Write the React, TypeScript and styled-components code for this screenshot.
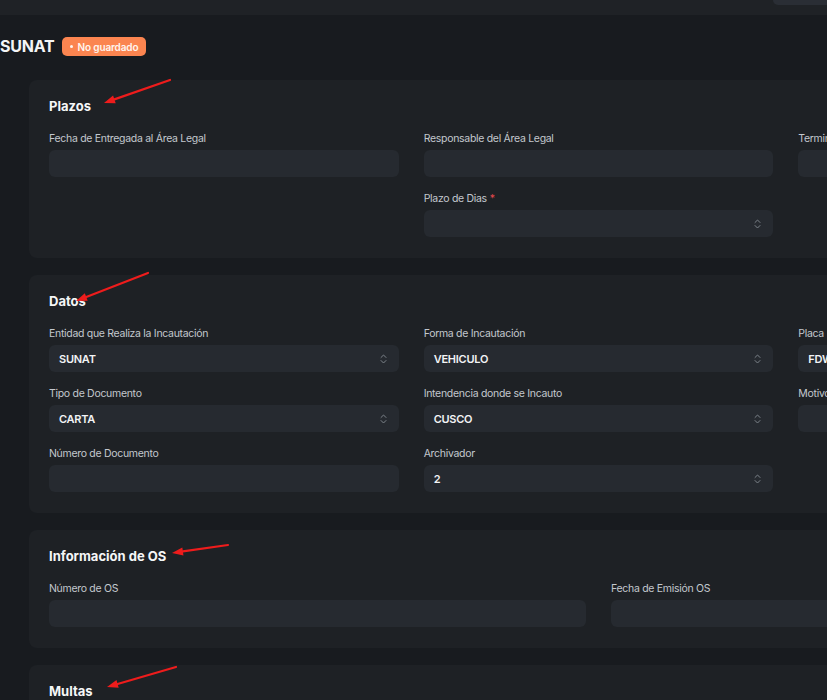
import React from "react";
import styled, { createGlobalStyle } from "styled-components";

const Global = createGlobalStyle`
  html, body { margin: 0; padding: 0; background: #181b1f; overflow: hidden; }
  body { font-family: Inter, "Noto Sans", "Liberation Sans", sans-serif; -webkit-font-smoothing: antialiased; }
  * { box-sizing: border-box; }
`;

const Page = styled.div`
  position: relative;
  width: 827px;
  height: 700px;
  overflow: hidden;
  background: #181b1f;
`;

const TopBar = styled.header`
  height: 15px;
  background: #1f2226;
  display: flex;
  justify-content: flex-end;
  align-items: flex-start;
`;

const SearchStub = styled.div`
  width: 54px;
  height: 5px;
  background: #2a2e35;
  border-radius: 0 0 0 6px;
`;

const TitleRow = styled.div`
  display: flex;
  align-items: center;
  gap: 7px;
  padding: 22px 0 24px 0;
  height: 19px;
  box-sizing: content-box;
`;

const Title = styled.h1`
  margin: 0;
  font-size: 16px;
  line-height: 19px;
  font-weight: 700;
  color: #f4f5f6;
  letter-spacing: -0.2px;
`;

const Badge = styled.span`
  display: inline-flex;
  align-items: center;
  gap: 5px;
  height: 19px;
  padding: 0 8px 0 8px;
  border-radius: 5px;
  background: #fb8550;
  color: #fff6ef;
  font-size: 10px;
  font-weight: 600;
  letter-spacing: -0.15px;
`;

const Dot = styled.span`
  width: 3px;
  height: 3px;
  border-radius: 50%;
  background: #fff6ef;
`;

const CardList = styled.main`
  display: flex;
  flex-direction: column;
  gap: 17px;
  padding-left: 29px;
`;

const Card = styled.section`
  width: 1139px;
  flex-shrink: 0;
  background: #1e2125;
  border-radius: 8px;
  padding: 18px 20px 21px;
`;

const CardHeading = styled.h2`
  margin: 0 0 16px;
  font-size: 13px;
  line-height: 16px;
  font-weight: 700;
  color: #f5f6f7;
`;

const Columns = styled.div<{ $cols: number }>`
  display: grid;
  grid-template-columns: repeat(${(p) => p.$cols}, 1fr);
  column-gap: 25px;
  align-items: start;
`;

const Column = styled.div`
  display: flex;
  flex-direction: column;
  gap: 13px;
`;

const Field = styled.div`
  display: flex;
  flex-direction: column;
  gap: 4px;
`;

const Label = styled.label`
  font-size: 10.5px;
  line-height: 17px;
  letter-spacing: -0.3px;
  color: #c3c8ce;
  white-space: nowrap;
`;

const Req = styled.span`
  color: #e5484d;
  margin-left: 3px;
`;

const Control = styled.div`
  height: 27px;
  margin-top: -1px;
  border-radius: 6px;
  background: #262a30;
  display: flex;
  align-items: center;
  justify-content: space-between;
  padding: 0 12px 0 10px;
  font-size: 11px;
  font-weight: 600;
  letter-spacing: -0.25px;
  color: #f2f3f5;
  white-space: nowrap;
  overflow: hidden;
`;

const Overlay = styled.svg`
  position: absolute;
  left: 0;
  top: 0;
  pointer-events: none;
`;

const Chevrons = () => (
  <svg width="7" height="12" viewBox="0 0 7 12" fill="none" stroke="#7d838a" strokeWidth="1" strokeLinecap="round" strokeLinejoin="round">
    <path d="M1 4.5 L3.5 2 L6 4.5" />
    <path d="M1 7.5 L3.5 10 L6 7.5" />
  </svg>
);

type F = { label: string; value?: string; select?: boolean; req?: boolean };

const FieldView = ({ f }: { f: F }) => (
  <Field>
    <Label>
      {f.label}
      {f.req && <Req>*</Req>}
    </Label>
    <Control>
      <span>{f.value ?? ""}</span>
      {f.select && <Chevrons />}
    </Control>
  </Field>
);

type Section = { title: string; cols: F[][] };

const sections: Section[] = [
  {
    title: "Plazos",
    cols: [
      [{ label: "Fecha de Entregada al Área Legal" }],
      [{ label: "Responsable del Área Legal" }, { label: "Plazo de Dias", req: true, select: true }],
      [{ label: "Termino de Plazo" }],
    ],
  },
  {
    title: "Datos",
    cols: [
      [
        { label: "Entidad que Realiza la Incautación", value: "SUNAT", select: true },
        { label: "Tipo de Documento", value: "CARTA", select: true },
        { label: "Número de Documento" },
      ],
      [
        { label: "Forma de Incautación", value: "VEHICULO", select: true },
        { label: "Intendencia donde se Incauto", value: "CUSCO", select: true },
        { label: "Archivador", value: "2", select: true },
      ],
      [{ label: "Placa", value: "FDW-123" }, { label: "Motivo de Incautación" }],
    ],
  },
  {
    title: "Información de OS",
    cols: [[{ label: "Número de OS" }], [{ label: "Fecha de Emisión OS" }]],
  },
  {
    title: "Multas",
    cols: [[{ label: "Multa" }], [{ label: "Monto" }], [{ label: "Estado" }]],
  },
];

const arrows: [number, number, number, number][] = [
  [170, 80, 104, 103],
  [148, 273, 76, 301],
  [228, 545, 172, 553],
  [176, 667, 107, 687],
];

const Arrow = ({ a }: { a: [number, number, number, number] }) => {
  const [x1, y1, x2, y2] = a;
  const dx = x2 - x1;
  const dy = y2 - y1;
  const len = Math.hypot(dx, dy);
  const ux = dx / len;
  const uy = dy / len;
  const hl = 11;
  const hw = 4;
  const bx = x2 - ux * hl;
  const by = y2 - uy * hl;
  const pts = `${x2},${y2} ${bx - uy * hw},${by + ux * hw} ${bx + uy * hw},${by - ux * hw}`;
  return (
    <g>
      <line x1={x1} y1={y1} x2={bx} y2={by} stroke="#ee1c1c" strokeWidth="2.2" strokeLinecap="round" />
      <polygon points={pts} fill="#ee1c1c" />
    </g>
  );
};

export default function App() {
  return (
    <Page>
      <Global />
      <TopBar>
        <SearchStub />
      </TopBar>
      <TitleRow>
        <Title>SUNAT</Title>
        <Badge>
          <Dot />
          No guardado
        </Badge>
      </TitleRow>
      <CardList>
        {sections.map((s) => (
          <Card key={s.title}>
            <CardHeading>{s.title}</CardHeading>
            <Columns $cols={s.cols.length}>
              {s.cols.map((col, i) => (
                <Column key={i}>
                  {col.map((f) => (
                    <FieldView key={f.label} f={f} />
                  ))}
                </Column>
              ))}
            </Columns>
          </Card>
        ))}
      </CardList>
      <Overlay width="827" height="700" viewBox="0 0 827 700">
        {arrows.map((a, i) => (
          <Arrow key={i} a={a} />
        ))}
      </Overlay>
    </Page>
  );
}
